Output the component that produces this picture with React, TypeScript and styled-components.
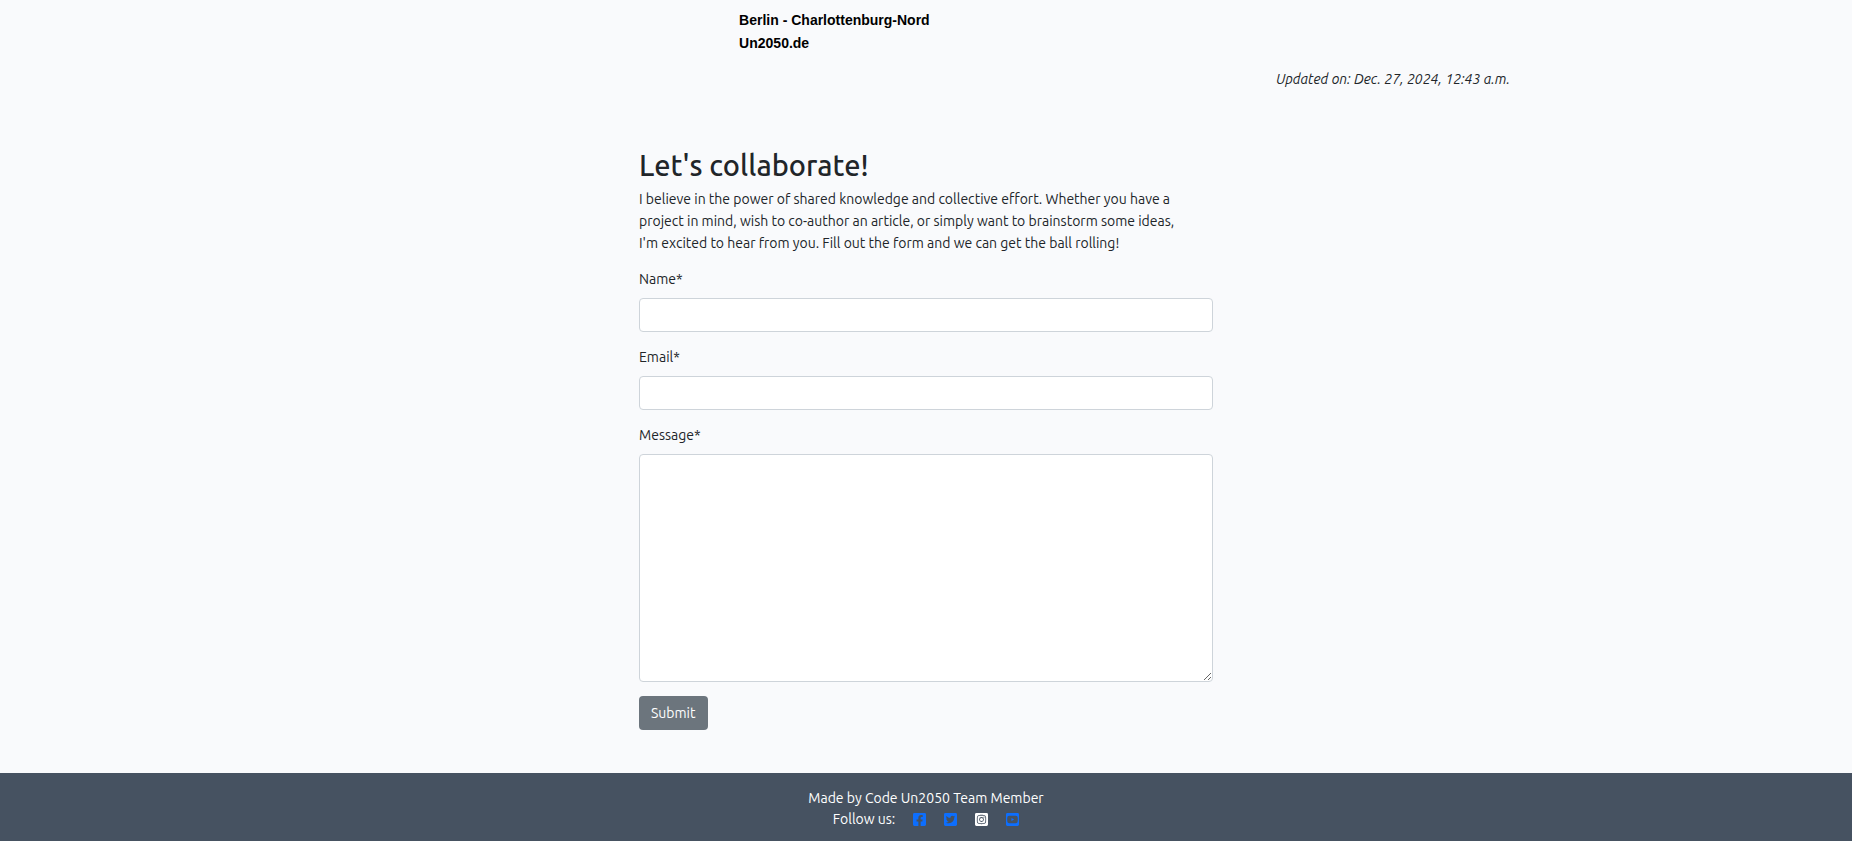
import React from "react";
import styled, { createGlobalStyle } from "styled-components";
import {
  FaFacebookSquare,
  FaTwitterSquare,
  FaInstagramSquare,
  FaYoutubeSquare,
} from "react-icons/fa";

const GlobalStyle = createGlobalStyle`
  *, *::before, *::after { box-sizing: border-box; }
  body {
    margin: 0;
    background: #f9fafc;
    color: #212529;
    font-family: Ubuntu, "Noto Sans", "Open Sans", sans-serif;
    font-size: 14px;
    line-height: 22px;
  }
`;

const Page = styled.div`
  display: flex;
  flex-direction: column;
  min-height: 100vh;
`;

const Article = styled.article`
  width: 100%;
  max-width: 1196px;
  margin: 0 auto;
  padding: 9px 14px 0;
`;

const Signature = styled.p`
  margin: 0 0 13px;
  padding-left: 34%;
  color: #000;
  font: bold 14px/23px "Liberation Sans", Arial, sans-serif;
`;

const Updated = styled.p`
  margin: 0;
  text-align: right;
  font-style: italic;
`;

const Collaborate = styled.section`
  width: 100%;
  max-width: 598px;
  margin: 0 auto;
  padding: 58px 12px 43px;
`;

const Title = styled.h2`
  margin: 0 0 6px;
  font-size: 29px;
  font-weight: 500;
  line-height: 34px;
`;

const Intro = styled.p`
  max-width: 550px;
  margin: 0 0 14px;
`;

const Form = styled.form`
  display: flex;
  flex-direction: column;
  align-items: flex-start;
  gap: 14px;
`;

const Field = styled.div`
  display: flex;
  flex-direction: column;
  gap: 8px;
  width: 100%;
`;

const Input = styled.input`
  width: 100%;
  height: 34px;
  padding: 5px 11px;
  border: 1px solid #ced4da;
  border-radius: 4px;
  background: #fff;
  color: inherit;
  font: inherit;
`;

const TextArea = styled.textarea`
  display: block;
  width: 100%;
  height: 228px;
  padding: 5px 11px;
  border: 1px solid #ced4da;
  border-radius: 4px;
  background: #fff;
  color: inherit;
  font: inherit;
  resize: vertical;
`;

const SubmitButton = styled.button`
  height: 34px;
  padding: 0 12px;
  border: 0;
  border-radius: 4px;
  background: #6c757d;
  color: #fff;
  font: inherit;
`;

const Footer = styled.footer`
  flex: 1;
  padding: 15px 14px 11px;
  background: #465261;
  color: #fff;
  line-height: 21px;
  text-align: center;
`;

const FooterLine = styled.div`
  display: flex;
  justify-content: center;
  align-items: center;
`;

const SocialLink = styled.a<{ $color: string }>`
  display: flex;
  margin-left: 18px;
  color: ${(p) => p.$color};

  svg { width: 13px; height: 15px; }
`;

const socials = [
  { name: "Facebook", Icon: FaFacebookSquare, color: "#0d6efd" },
  { name: "Twitter", Icon: FaTwitterSquare, color: "#0d6efd" },
  { name: "Instagram", Icon: FaInstagramSquare, color: "#ffffff" },
  { name: "YouTube", Icon: FaYoutubeSquare, color: "#0d6efd" },
];

export default function App() {
  return (
    <>
      <GlobalStyle />
      <Page>
        <Article>
          <Signature>
            Berlin - Charlottenburg-Nord
            <br />
            Un2050.de
          </Signature>
          <Updated>Updated on: Dec. 27, 2024, 12:43 a.m.</Updated>
        </Article>
        <Collaborate>
          <Title>Let's collaborate!</Title>
          <Intro>
            I believe in the power of shared knowledge and collective effort. Whether you have a
            project in mind, wish to co-author an article, or simply want to brainstorm some ideas,
            I'm excited to hear from you. Fill out the form and we can get the ball rolling!
          </Intro>
          <Form onSubmit={(e) => e.preventDefault()}>
            <Field>
              <label htmlFor="name">Name*</label>
              <Input id="name" type="text" required />
            </Field>
            <Field>
              <label htmlFor="email">Email*</label>
              <Input id="email" type="email" required />
            </Field>
            <Field>
              <label htmlFor="message">Message*</label>
              <TextArea id="message" required />
            </Field>
            <SubmitButton type="submit">Submit</SubmitButton>
          </Form>
        </Collaborate>
        <Footer>
          <FooterLine>Made by Code Un2050 Team Member</FooterLine>
          <FooterLine>
            Follow us:
            {socials.map(({ name, Icon, color }) => (
              <SocialLink key={name} href="#" aria-label={name} $color={color}>
                <Icon />
              </SocialLink>
            ))}
          </FooterLine>
        </Footer>
      </Page>
    </>
  );
}
